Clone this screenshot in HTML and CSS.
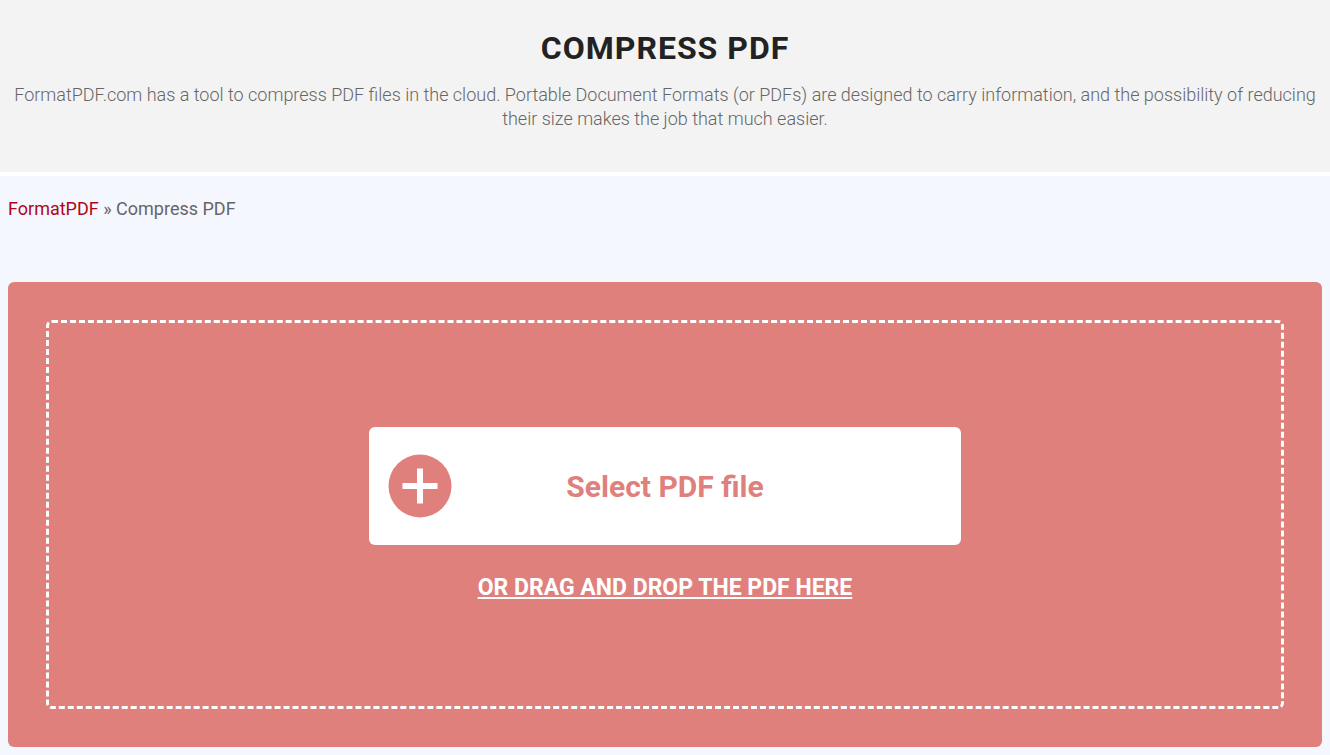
FILE: index.html
```html
<!DOCTYPE html>
<html lang="en">
<head>
    <meta charset="UTF-8">
    <meta name="viewport" content="width=device-width, initial-scale=1.0">
    <title>Compress PDF</title>
    <link rel="stylesheet" href="styles.css">
</head>
<body>
    <header class="page-header">
        <h1>Compress PDF</h1>
        <p>FormatPDF.com has a tool to compress PDF files in the cloud. Portable Document Formats (or PDFs) are designed to carry information, and the possibility of reducing their size makes the job that much easier.</p>
    </header>

    <main>
        <nav class="breadcrumb">
            <a href="#">FormatPDF</a> » <span>Compress PDF</span>
        </nav>

        <!-- Upload Section -->
        <section class="uploader">
            <div class="drop-area">
                <button type="button" class="select-button">
                    <svg class="plus-icon" viewBox="0 0 64 64" aria-hidden="true">
                        <circle cx="32" cy="32" r="31.5" fill="#e0807d"/>
                        <path d="M32 14.5v35M14.5 32h35" stroke="#fff" stroke-width="6"/>
                    </svg>
                    <span>Select PDF file</span>
                </button>
                <p class="drop-text">Or drag and drop the PDF here</p>
            </div>
        </section>
    </main>
</body>
</html>
```
FILE: styles.css
```css
* {
    box-sizing: border-box;
}
body {
    margin: 0;
    font-family: Roboto, sans-serif;
    font-size: 18px;
    line-height: 24px;
    color: #666;
    background-color: #f5f7ff;
}
.page-header {
    padding: 28px 8px 41px;
    text-align: center;
    background-color: #f3f3f3;
    border-bottom: 4px solid #fff;
}
h1 {
    margin: 0 0 15px;
    font-size: 32px;
    line-height: 40px;
    font-weight: 700;
    letter-spacing: 1px;
    text-transform: uppercase;
    color: #222;
}
.page-header p {
    margin: 0;
    font-weight: 300;
}
main {
    padding: 21px 8px 8px;
}
.breadcrumb a {
    color: #b00718;
    text-decoration: none;
}
.uploader {
    margin-top: 61px;
    padding: 38px;
    background-color: #e0807d;
    border-radius: 6px;
}
.drop-area {
    display: flex;
    flex-direction: column;
    align-items: center;
    padding: 104px 0 105px;
    border: 3px dashed #fff;
    border-radius: 6px;
}
.select-button {
    position: relative;
    width: 48%;
    height: 118px;
    border: none;
    border-radius: 6px;
    background-color: #fff;
    color: #e0807d;
    font-family: inherit;
    font-size: 30px;
    font-weight: 700;
    cursor: pointer;
}
.plus-icon {
    position: absolute;
    left: 19px;
    top: 27px;
    width: 64px;
    height: 64px;
}
.drop-text {
    margin: 30px 0 0;
    font-size: 23px;
    line-height: 26px;
    font-weight: 700;
    text-transform: uppercase;
    text-decoration: underline;
    color: #fff;
}
```
